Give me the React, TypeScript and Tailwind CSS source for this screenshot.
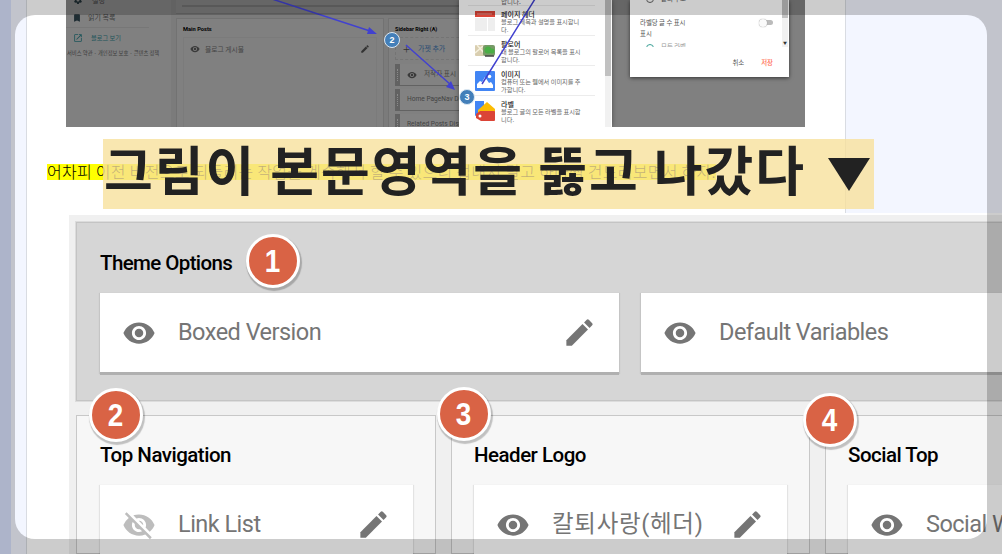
import type { ReactNode } from 'react';
import clsx from 'clsx';
import { MdBookmark, MdOpenInNew, MdSettings, MdVisibility, MdVisibilityOff } from 'react-icons/md';

type BadgeProps = { className: string; children: ReactNode };

function RedBadge({ className, children }: BadgeProps) {
  return (
    <div
      className={clsx(
        'absolute flex h-[54px] w-[54px] items-center justify-center rounded-full border-[3.5px] border-white bg-[#d96345] font-["Liberation_Sans",sans-serif] text-[31px] leading-none font-bold text-white shadow-[1px_2px_1px_1px_rgba(0,0,0,0.22)]',
        className,
      )}
    >
      <span className="scale-x-90">{children}</span>
    </div>
  );
}

function BlueBadge({ className, children }: BadgeProps) {
  return (
    <div
      className={clsx(
        'absolute flex h-4 w-4 items-center justify-center rounded-full border-[1.5px] border-[#dce8f2] bg-[#437fb9] font-["Liberation_Sans",sans-serif] text-[9px] leading-none font-bold text-white',
        className,
      )}
    >
      {children}
    </div>
  );
}

// solid pencil
function Pencil({ className }: { className: string }) {
  return (
    <svg viewBox="0 0 24 24" fill="currentColor" className={className}>
      <path d="M3 17.25V21h3.75L17.81 9.94l-3.75-3.75L3 17.25z" />
      <path d="M20.71 7.04a1 1 0 0 0 0-1.41l-2.34-2.34a1 1 0 0 0-1.41 0l-1.83 1.83 3.75 3.75 1.83-1.83z" />
    </svg>
  );
}

function BlogSidebar() {
  return (
    <div className="w-[105px] shrink-0 text-[7px] text-[#3c3c3c]">
      <div className="flex h-2 items-center gap-[9px] pl-[7px]">
        <MdSettings className="-mt-2 h-2.5 w-2.5 text-[#1f2d33]" />
        <span className="-mt-2 text-[7px]">설정</span>
      </div>
      <div className="mr-[22px] flex h-5 items-center gap-[6px] border-b border-[#777] pl-[6px]">
        <MdBookmark className="h-2.5 w-2.5 text-[#1f2d33]" />
        <span className="text-[7px]">읽기 목록</span>
      </div>
      <div className="flex h-[19px] items-center gap-2 pl-[7px] text-[#1c5459]">
        <MdOpenInNew className="h-2.5 w-2.5" />
        <span className="text-[6.2px]">블로그 보기</span>
      </div>
      <div className="mt-[2px] pl-px text-[5.3px] leading-[8px] whitespace-nowrap">
        서비스 약관 · 개인정보 보호 · 콘텐츠 정책
      </div>
    </div>
  );
}

function MainPosts() {
  return (
    <div className="mt-[18px] h-[120px] w-[208px] shrink-0 border border-[#727272] bg-[#808080] px-[6px] pt-[6px]">
      <h3 className="font-[Roboto,sans-serif] text-[5.7px] leading-[9px] font-bold text-black">Main Posts</h3>
      <div className="mt-[3px] h-[100px] border border-[#7b7b7b]">
        <div className="flex h-[22px] items-center px-[6px]">
          <MdVisibility className="h-2.5 w-2.5 text-[#3a3a3a]" />
          <span className="ml-[5px] text-[6.8px] text-[#454545]">블로그 게시물</span>
          <Pencil className="ml-auto h-2.5 w-2.5 text-[#333]" />
        </div>
      </div>
    </div>
  );
}

function SideRow({ children, eye }: { children: ReactNode; eye?: boolean }) {
  return (
    <div className="mb-[3px] flex h-[22px] w-[100px] items-center border-b border-[#626262] bg-[#828282] font-[Roboto,'Noto_Sans_CJK_KR',sans-serif] text-[6.6px] whitespace-nowrap text-[#424242]">
      <span className="mr-[7px] flex h-full w-[5px] items-center justify-center bg-[#626262]">
        <span className="h-3 border-l border-dotted border-[#8a8a8a]" />
      </span>
      {eye && <MdVisibility className="mr-[7px] h-2.5 w-2.5 text-[#3a3a3a]" />}
      {children}
    </div>
  );
}

function SidebarRight() {
  return (
    <div className="mt-[18px] ml-1 h-[120px] w-[120px] shrink-0 border border-[#727272] bg-[#808080] px-[6px] pt-[6px]">
      <h3 className="font-[Roboto,sans-serif] text-[5.5px] leading-[9px] font-bold text-black">Sidebar Right (A)</h3>
      <div className="mt-[3px] mb-[4px] flex h-[23px] w-[100px] items-center border border-dashed border-[#747474] pl-[7px] text-[7px] text-[#294c73]">
        <span className="mr-2 text-[13px] leading-none font-light text-[#333]">+</span>
        가젯 추가
      </div>
      <SideRow eye>저작자 표시</SideRow>
      <SideRow>Home PageNav Display</SideRow>
      <SideRow>Related Posts Display</SideRow>
    </div>
  );
}

function HeaderIcon() {
  return (
    <svg viewBox="0 0 20 20" className="h-5 w-5">
      <rect width="20" height="6" fill="#db4437" />
      <path d="M2 3h15" stroke="#ef9a91" strokeWidth="1" />
      <path d="M0 7h12v13H0zM13 7h7v13h-7z" fill="#eeeeee" />
    </svg>
  );
}

function FollowerIcon() {
  return (
    <svg viewBox="0 0 20 12" className="h-3 w-5">
      <rect width="9" height="11" rx="1" fill="#d9ceb0" />
      <path d="M0 8l8-7M2 0l7 8" stroke="#f6f1df" strokeWidth="1.5" />
      <rect x="8" width="12" height="11" rx="2" fill="#779a67" />
      <circle cx="13" cy="5" r="3.5" fill="#4aae45" />
      <circle cx="17" cy="6" r="2.5" fill="#4aae45" />
      <path d="M10 11h9" stroke="#444" strokeWidth="1.5" />
    </svg>
  );
}

function ImageIcon() {
  return (
    <svg viewBox="0 0 20 20" className="h-5 w-5">
      <rect width="20" height="20" rx="1" fill="#4285f4" />
      <path d="M2 17v-4l3-3 2 1 3-5 4 6 2-1 2 3v3z" fill="#fff" />
      <circle cx="14.5" cy="5.5" r="1.8" fill="#fff" />
    </svg>
  );
}

function LabelIcon() {
  return (
    <svg viewBox="0 0 20 20" className="h-5 w-5">
      <path d="M0 0h9v10l-9 5z" fill="#4285f4" />
      <path d="M3 9l9-8 8 7v4H3z" fill="#fbbc04" />
      <path d="M5 10h14a1 1 0 0 1 1 1v8a1 1 0 0 1-1 1H6l-5-3v-4z" fill="#db4437" />
      <circle cx="5" cy="15" r="1.5" fill="#fff" />
    </svg>
  );
}

const gadgets = [
  { title: '페이지 헤더', lines: ['블로그 제목과 설명을 표시합니', '다.'], icon: <HeaderIcon /> },
  { title: '팔로어', lines: ['내 블로그의 팔로어 목록을 표시', '합니다.'], icon: <FollowerIcon /> },
  { title: '이미지', lines: ['컴퓨터 또는 웹에서 이미지를 추', '가합니다.'], icon: <ImageIcon /> },
  { title: '라벨', lines: ['블로그 글의 모든 라벨을 표시합', '니다.'], icon: <LabelIcon /> },
];

function GadgetDialog() {
  return (
    <div className="absolute top-0 left-[393px] flex h-[127px] w-[153px] bg-white shadow-[0_0_5px_rgba(0,0,0,0.4)]">
      <div className="w-[146px] pt-[5px] pl-[9px]">
        <div className="-mt-[8px] h-2 pl-[33px] text-[6.5px] leading-[8px] text-[#666]">합니다.</div>
        {gadgets.map((gadget) => (
          <div key={gadget.title} className="flex h-[30px] w-[127px] items-center gap-[6px] border-t border-[#ececec] pl-[7px]">
            <span className="flex h-5 w-5 shrink-0 items-center">{gadget.icon}</span>
            <div className="pt-[3px] text-[6.2px] leading-[8px] whitespace-nowrap text-[#666]">
              <div className="text-[7px] font-medium text-[#222]">{gadget.title}</div>
              {gadget.lines.map((line) => (
                <div key={line}>{line}</div>
              ))}
            </div>
          </div>
        ))}
      </div>
      <div className="w-[6px] bg-[#f1f1f1]">
        <div className="h-[76px] bg-[#c1c1c1]" />
      </div>
    </div>
  );
}

function SettingsDialog() {
  return (
    <div className="absolute top-0 left-[564px] h-[77px] w-[159px] bg-white text-[6.4px] text-[#555] shadow-[0_1px_4px_rgba(0,0,0,0.6)]">
      <div className="flex h-[47px] overflow-hidden">
        <div className="w-[152px] pl-[10px]">
          <div className="flex h-[17px] items-start gap-[7px] pl-[6px] leading-none">
            <span className="-mt-[5px] h-2 w-2 rounded-full border border-[#666]" />
            <span className="-mt-[4px]">글의 수보</span>
          </div>
          <div className="flex h-[11px] items-center">
            <span>라벨당 글 수 표시</span>
            <span className="ml-auto flex h-[5px] w-[14px] items-center rounded-full bg-[#bbb]">
              <span className="h-2 w-2 rounded-full bg-[#fafafa] shadow-[0_0_1px_#777]" />
            </span>
            <span className="w-[9px]" />
          </div>
          <div className="leading-[11px]">표시</div>
          <div className="mt-[5px] flex gap-[7px] pl-[6px] leading-none">
            <span className="h-2 w-2 rounded-full border border-[#3da197]" />
            <span className="text-[#999]">모든 라벨</span>
          </div>
        </div>
        <div className="flex w-[6px] flex-col justify-between bg-[#f1f1f1]">
          <div className="h-[18px] bg-[#c1c1c1]" />
          <div className="text-center text-[4px] leading-[7px] text-[#333]">▼</div>
        </div>
      </div>
      <div className="flex items-center justify-end gap-[17px] pt-[11px] pr-[16px] leading-[10px]">
        <span>취소</span>
        <span className="font-medium text-[#ff6b4f]">저장</span>
      </div>
    </div>
  );
}

function Arrows() {
  return (
    <svg className="absolute inset-0 h-[127px] w-[739px]" viewBox="66 0 739 127" fill="none" stroke="#4141cf" strokeWidth="1.5">
      <path d="M272-1L370 31M406 45l45 40M482 84L535-1" />
      <path d="M377 34l-8-7-2 7zM455 90l-4-9-5 6z" fill="#4141cf" stroke="none" />
    </svg>
  );
}

function LayoutShot() {
  return (
    <div className="relative ml-[39px] flex h-[127px] w-[739px] overflow-hidden bg-[#808080]">
      <BlogSidebar />
      <div className="relative flex w-[634px] bg-[#7b7b7b] pl-[5px]">
        <div className="absolute top-0 left-[5px] h-[14px] w-[322px] border-b border-[#707070] bg-[#808080] px-[6px]">
          <div className="h-[7px] border-b-2 border-[#6e6e6e]" />
        </div>
        <MainPosts />
        <SidebarRight />
        <div className="w-[300px] bg-[#808080]" />
      </div>
      <GadgetDialog />
      <SettingsDialog />
      <Arrows />
      <BlueBadge className="top-[32px] left-[318px]">2</BlueBadge>
      <BlueBadge className="top-[89px] left-[393px]">3</BlueBadge>
    </div>
  );
}

type CardProps = { title: string; off?: boolean; className?: string; titleClass?: string };

function GadgetCard({ title, off, className, titleClass = 'tracking-[-0.52px]' }: CardProps) {
  const Eye = off ? MdVisibilityOff : MdVisibility;
  return (
    <div
      className={clsx(
        'flex h-[79px] shrink-0 items-center bg-white pr-[22px] pl-[22px] shadow-[0_3px_0_#b0b0b0,0_1px_1px_1px_rgba(0,0,0,0.08)]',
        className,
      )}
    >
      <Eye className={clsx('h-[34px] w-[34px] shrink-0', off ? 'text-[#bdbdbd]' : 'text-[#757575]')} />
      <span className={clsx('ml-[22px] text-[23.5px] whitespace-nowrap text-[#757575]', titleClass)}>{title}</span>
      <Pencil className="ml-auto h-[35px] w-[35px] shrink-0 text-[#757575]" />
    </div>
  );
}

function Section({ title, className, children }: { title: string; className: string; children: ReactNode }) {
  return (
    <section className={clsx('shrink-0 border border-[#c8c8c8] bg-[#f7f7f7] pt-[26px] pl-[22px]', className)}>
      <h2 className="mb-[16px] text-[20.5px] leading-[27px] font-medium tracking-[-0.5px] whitespace-nowrap text-black">{title}</h2>
      {children}
    </section>
  );
}

function ThemeShot() {
  return (
    <div className="relative ml-[42px] flex h-[341px] w-[1010px] flex-col border-t-2 border-white bg-[#f0f0f0] pt-[7px] pl-[7px] font-[Roboto,'Noto_Sans_CJK_KR',sans-serif]">
      <section className="h-[179px] shrink-0 border border-[#c4c4c4] bg-[#d6d6d6] pt-[27px] pl-[23px] ring-1 ring-[#dcdcdc]">
        <h2 className="mb-[16px] text-[20.5px] leading-[27px] font-medium tracking-[-0.6px] text-black">Theme Options</h2>
        <div className="flex gap-[22px]">
          <GadgetCard title="Boxed Version" className="w-[519px]" />
          <GadgetCard title="Default Variables" className="w-[520px]" />
        </div>
      </section>
      <div className="mt-[14px] flex h-[139px] gap-[15px] overflow-hidden">
        <Section title="Top Navigation" className="w-[360px] pl-[23px]">
          <GadgetCard title="Link List" off className="w-[313px]" />
        </Section>
        <Section title="Header Logo" className="w-[359px]">
          <GadgetCard title="칼퇴사랑(헤더)" titleClass="tracking-[0.7px]" className="w-[313px]" />
        </Section>
        <Section title="Social Top" className="w-[359px]">
          <GadgetCard title="Social Widget" className="w-[313px]" />
        </Section>
      </div>
      <RedBadge className="top-[19px] left-[177px]">1</RedBadge>
      <RedBadge className="top-[173px] left-[20px]">2</RedBadge>
      <RedBadge className="top-[172px] left-[368px]">3</RedBadge>
      <RedBadge className="top-[178px] left-[734px]">4</RedBadge>
    </div>
  );
}

export default function App() {
  return (
    <div className="relative flex h-[554px] w-[1002px] overflow-hidden bg-[#f3f6ff] font-['Noto_Sans_CJK_KR',sans-serif]">
      <div className="w-[11px] shrink-0 bg-[#d9e1fd]" />
      <main className="ml-[15px] w-[820px] shrink-0 border-x border-[#d9dce2] bg-white">
        <LayoutShot />
        <p className="mt-[33px] mb-[29px] ml-[20px] flex h-[24px] items-center">
          <span className="h-4 bg-[#ffff00] text-[16px] leading-[14px] font-light tracking-[0.28px] whitespace-nowrap text-black">
            어차피 이전 버전으로 되돌리는 작업을 계속해서 할 수 있으니 겁내지 말고 하나씩 건드려보면서 하자.
          </span>
        </p>
        <ThemeShot />
      </main>

      {/* caption */}
      <div className="absolute top-[139px] left-[103px] flex h-[70px] w-[771px] items-center bg-[#f7e09a]/78 pl-[1px] text-[53px] leading-none font-bold tracking-[2px] whitespace-nowrap text-[#222]">
        <span className="-mt-3">그림이 본문영역을 뚫고 나갔다</span>
        <svg viewBox="0 0 42 33" className="absolute top-[19px] left-[725px] h-[33px] w-[42px]">
          <path d="M0 0h42L21 33z" fill="#222" />
        </svg>
      </div>

      {/* dimmed frame with rounded window */}
      <div className="pointer-events-none absolute inset-[15px] rounded-[20px] shadow-[0_0_0_40px_rgba(0,0,0,0.2)]" />
    </div>
  );
}
